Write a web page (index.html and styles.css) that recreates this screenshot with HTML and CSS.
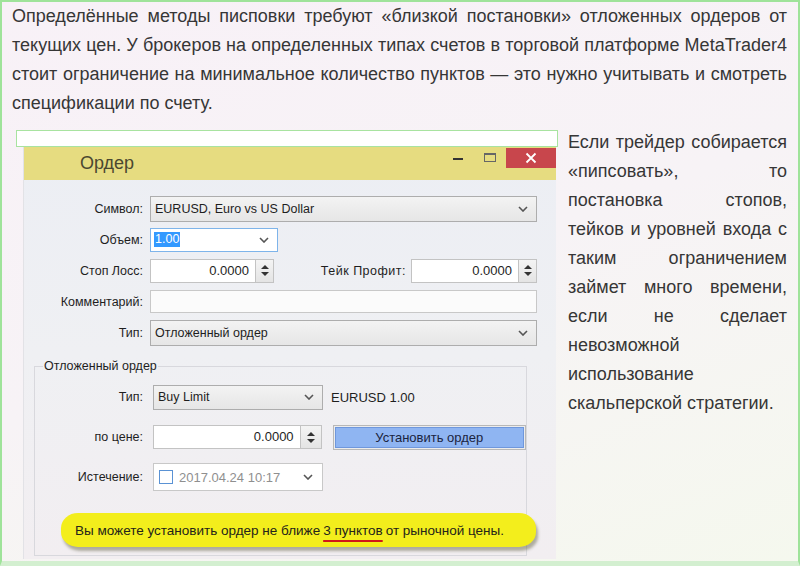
FILE: index.html
```html
<!DOCTYPE html>
<html lang="ru">
<head>
<meta charset="utf-8">
<title>Ордер</title>
<link rel="stylesheet" href="styles.css">
</head>
<body>
<div class="frame">
  <p class="intro">
    <span class="ln">Определённые методы писповки требуют «близкой постановки» отложенных ордеров от</span>
    <span class="ln">текущих цен. У брокеров на определенных типах счетов в торговой платформе MetaTrader4</span>
    <span class="ln">стоит ограничение на минимальное количество пунктов — это нужно учитывать и смотреть</span>
    <span class="ln last">спецификации по счету.</span>
  </p>
  <div class="content">
    <div class="figure">
      <div class="strip"></div>
      <div class="dialog">
        <div class="titlebar">
          <span class="title">Ордер</span>
          <div class="controls">
            <span class="min"></span>
            <span class="max"></span>
            <span class="close"><svg width="12" height="12" viewBox="0 0 12 12"><path d="M1.5 1.5 L10.5 10.5 M10.5 1.5 L1.5 10.5" stroke="#fff" stroke-width="1.8" fill="none"/></svg></span>
          </div>
        </div>
        <div class="dbody">
          <div class="frow">
            <span class="lbl">Символ:</span>
            <div class="select wide"><span>EURUSD, Euro vs US Dollar</span><svg class="chev" width="10" height="6" viewBox="0 0 10 6"><path d="M1 1 L5 5 L9 1" stroke="#555" stroke-width="1.6" fill="none"/></svg></div>
          </div>
          <div class="frow">
            <span class="lbl">Объем:</span>
            <div class="combo"><span class="sel">1.00</span><svg class="chev" width="10" height="6" viewBox="0 0 10 6"><path d="M1 1 L5 5 L9 1" stroke="#555" stroke-width="1.6" fill="none"/></svg></div>
          </div>
          <div class="frow">
            <span class="lbl">Стоп Лосс:</span>
            <div class="numbox sl"><span class="num">0.0000</span><span class="spin"><i class="up"></i><i class="dn"></i></span></div>
            <span class="lbl2">Тейк Профит:</span>
            <div class="numbox tp"><span class="num">0.0000</span><span class="spin"><i class="up"></i><i class="dn"></i></span></div>
          </div>
          <div class="frow">
            <span class="lbl">Комментарий:</span>
            <div class="textbox wide"></div>
          </div>
          <div class="frow">
            <span class="lbl">Тип:</span>
            <div class="select wide"><span>Отложенный ордер</span><svg class="chev" width="10" height="6" viewBox="0 0 10 6"><path d="M1 1 L5 5 L9 1" stroke="#555" stroke-width="1.6" fill="none"/></svg></div>
          </div>
          <fieldset class="group">
            <legend>Отложенный ордер</legend>
            <div class="grow">
              <span class="glbl">Тип:</span>
              <div class="select short"><span>Buy Limit</span><svg class="chev" width="10" height="6" viewBox="0 0 10 6"><path d="M1 1 L5 5 L9 1" stroke="#555" stroke-width="1.6" fill="none"/></svg></div>
              <span class="info">EURUSD 1.00</span>
            </div>
            <div class="grow">
              <span class="glbl">по цене:</span>
              <div class="numbox price"><span class="num">0.0000</span><span class="spin"><i class="up"></i><i class="dn"></i></span></div>
              <div class="btn"><span>Установить ордер</span></div>
            </div>
            <div class="grow">
              <span class="glbl">Истечение:</span>
              <div class="datebox"><span class="check"></span><span class="date">2017.04.24 10:17</span><svg class="chev" width="10" height="6" viewBox="0 0 10 6"><path d="M1 1 L5 5 L9 1" stroke="#555" stroke-width="1.6" fill="none"/></svg></div>
            </div>
            <div class="note">Вы можете установить ордер не ближе <span class="mark">3 пунктов</span> от рыночной цены.</div>
          </fieldset>
        </div>
      </div>
    </div>
    <p class="side">
      <span class="ln">Если трейдер собирается</span>
      <span class="ln">«пипсовать», то</span>
      <span class="ln">постановка стопов,</span>
      <span class="ln">тейков и уровней входа с</span>
      <span class="ln">таким ограничением</span>
      <span class="ln">займет много времени,</span>
      <span class="ln">если не сделает</span>
      <span class="ln">невозможной</span>
      <span class="ln">использование</span>
      <span class="ln last">скальперской стратегии.</span>
    </p>
  </div>
</div>
</body>
</html>
```

FILE: styles.css
```css
* { box-sizing: border-box; }
html, body { margin: 0; padding: 0; }
body { width: 800px; height: 566px; overflow: hidden; }

.frame {
  width: 800px;
  height: 566px;
  border: 2px solid #9fe39a;
  border-bottom: 5px solid #d3efd0;
  padding: 0 11px 0 10px;
  overflow: hidden;
  background: linear-gradient(160deg, #f8f1f7 0%, #f7f3f6 50%, #f5f8ee 100%);
  font-family: "Liberation Sans", Arial, sans-serif;
  color: #363636;
}

.intro, .side {
  margin: 0;
  font-size: 18px;
  line-height: 29px;
}
.ln { display: block; text-align: justify; text-align-last: justify; }
.ln.last { text-align-last: left; }

.content { display: flex; margin-top: 10px; }
.figure { width: 556px; flex: none; padding-top: 2px; }
.side { width: 219px; flex: none; }

.strip {
  margin-left: 4px;
  width: 542px;
  height: 17px;
  background: #fff;
  border: 1px solid #a8e3a0;
}

.dialog {
  margin-left: 11px;
  width: 533px;
  min-height: 410px;
  background: linear-gradient(#eceef4 0%, #eff0f3 50%, #f2eef1 100%);
  border-left: 1px solid #e2e2e6;
  font-family: "Liberation Sans", Arial, sans-serif;
  font-size: 12.5px;
  color: #1e1e1e;
}

.titlebar {
  height: 33px;
  background: #e6dc80;
  display: flex;
  align-items: center;
  padding-left: 56px;
}
.title { font-size: 18px; color: #4b4830; }
.controls { margin-left: auto; align-self: flex-start; display: flex; align-items: flex-start; }
.min { width: 10px; height: 2px; background: #333; margin-top: 11px; }
.max { width: 12px; height: 9px; border: 1px solid #666; border-top-width: 2px; margin-top: 6px; margin-left: 21px; }
.close {
  width: 50px; height: 20px; margin-top: 1px; margin-left: 10px;
  background: #c8464c;
  display: flex; align-items: center; justify-content: center;
}

.dbody { padding: 16px 19px 3px 0; }

.frow { display: flex; align-items: center; height: 25px; margin-bottom: 6px; }
.lbl { width: 119px; text-align: right; margin-right: 7px; flex: none; }
.lbl2 { margin-left: auto; margin-right: 5px; letter-spacing: 0.5px; }

.select {
  height: 26px;
  border: 1px solid #adadad;
  background: linear-gradient(#f3f3f3, #e6e6e6);
  display: flex; align-items: center; justify-content: space-between;
  padding: 0 8px 0 4px;
}
.select.wide { width: 388px; }
.select.short { width: 170px; height: 25px; }
.chev { flex: none; }

.combo {
  width: 128px; height: 24px;
  border: 1px solid #7eb4ea;
  background: #fff;
  display: flex; align-items: center; justify-content: space-between;
  padding: 0 8px 0 3px;
}
.sel { background: #3399ff; color: #fff; padding: 0 1px; line-height: 15px; }

.numbox { display: flex; height: 24px; }
.num {
  flex: 1;
  border: 1px solid #c3c3c3;
  background: #fff;
  text-align: right;
  padding-right: 6px;
  line-height: 22px;
  font-size: 13px;
}
.spin {
  width: 18px;
  border: 1px solid #c3c3c3;
  border-left: none;
  background: linear-gradient(#f4f4f4, #e4e4e4);
  display: flex; flex-direction: column; align-items: center; justify-content: center; gap: 3px;
}
.spin i { display: block; width: 0; height: 0; border-left: 4px solid transparent; border-right: 4px solid transparent; }
.spin .up { border-bottom: 4px solid #333; }
.spin .dn { border-top: 4px solid #333; }
.numbox.sl { width: 124px; }
.numbox.tp { width: 126px; }
.numbox.price { width: 170px; }
.numbox.price .spin { width: 21px; }

.textbox { height: 23px; border: 1px solid #c8c8c8; background: #fbfbfb; }
.textbox.wide { width: 388px; }

.group {
  margin: 14px 10px 0 10px;
  padding: 9px 0 8px 0;
  border: 1px solid #d8d8dd;
  min-width: 0;
}
.group legend { margin-left: 8px; padding: 0 1px; line-height: 15px; }

.grow { display: flex; align-items: center; height: 28px; margin-bottom: 12px; }
.glbl { width: 108px; text-align: right; margin-right: 10px; flex: none; }
.info { margin-left: 8px; font-size: 13px; }

.btn {
  margin-left: 11px;
  width: 195px; height: 25px;
  border: 1px solid #b8b8b8;
  padding: 1px;
  background: #ececec;
}
.btn span {
  display: flex; align-items: center; justify-content: center;
  height: 100%;
  background: #8fb5f2;
  border: 1px solid #6f97dc;
  color: #1b2440;
  font-size: 13px;
}

.datebox {
  width: 170px; height: 28px;
  border: 1px solid #c8c8c8;
  background: #fff;
  display: flex; align-items: center;
  padding: 0 9px 0 5px;
}
.check { width: 14px; height: 14px; border: 1px solid #5a92d4; background: #fff; flex: none; }
.date { margin-left: 6px; color: #8f8f8f; font-size: 13px; flex: 1; }

.note {
  margin: 22px 0 0 26px;
  width: 475px; height: 34px;
  background: #f3ee1c;
  border-radius: 17px / 15px;
  box-shadow: 2px 4px 3px rgba(90, 90, 60, 0.45);
  display: flex; align-items: center;
  padding-left: 14px;
  font-size: 13.5px;
  color: #24241a;
}
.mark {
  text-decoration: underline;
  text-decoration-color: #d01818;
  text-decoration-thickness: 2px;
  text-underline-offset: 5px;
  margin: 0 3px;
}
```
